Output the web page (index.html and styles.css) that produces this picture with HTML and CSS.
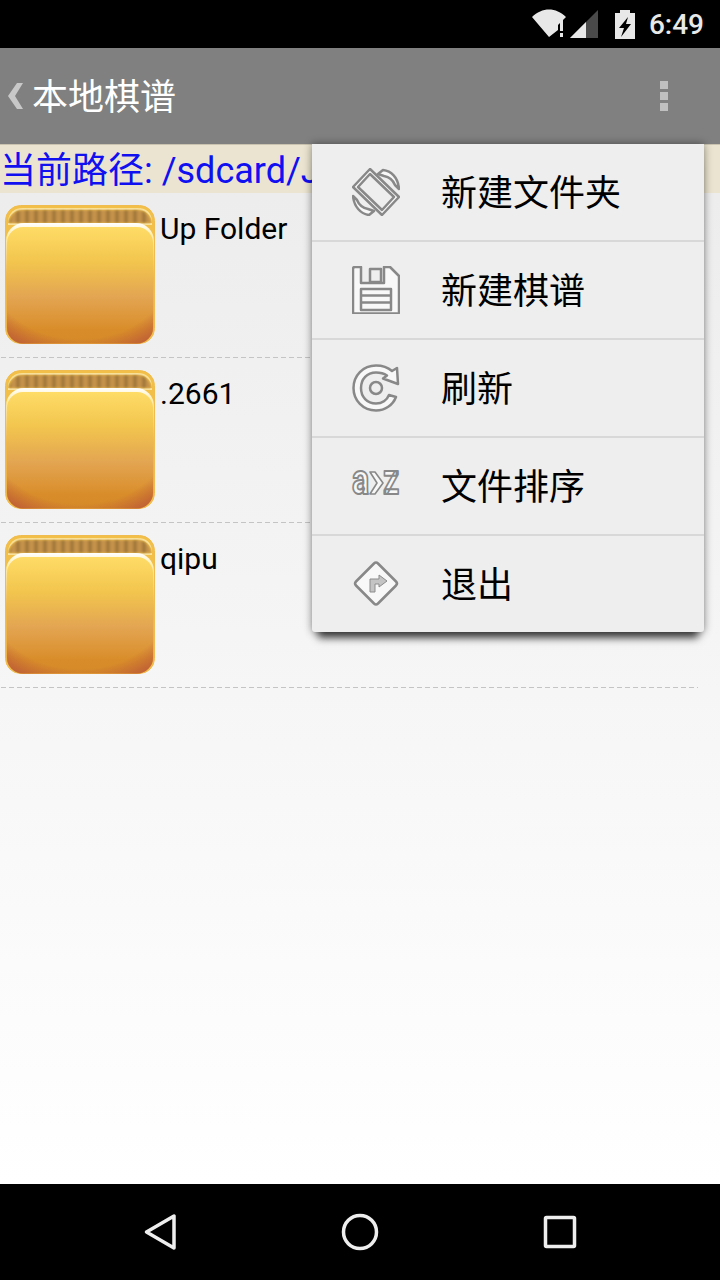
FILE: index.html
```html
<!DOCTYPE html>
<html lang="zh-CN">
<head>
    <meta charset="UTF-8">
    <meta name="viewport" content="width=device-width, initial-scale=1.0">
    <title>本地棋谱</title>
    <link rel="stylesheet" href="styles.css">
</head>
<body>

    <!-- shared folder picture -->
    <svg class="defs" width="0" height="0">
        <defs>
            <linearGradient id="folder-front" x1="0" y1="0" x2="0" y2="1">
                <stop offset="0" stop-color="#fedc66"/>
                <stop offset="0.3" stop-color="#f2c54e"/>
                <stop offset="0.6" stop-color="#e3a552"/>
                <stop offset="0.88" stop-color="#d98d2a"/>
                <stop offset="1" stop-color="#d58a28"/>
            </linearGradient>
            <radialGradient id="folder-corner" cx="0.5" cy="0.33" r="0.8">
                <stop offset="0.79" stop-color="#bf5f36" stop-opacity="0"/>
                <stop offset="1" stop-color="#bf5f36" stop-opacity="1"/>
            </radialGradient>
            <linearGradient id="folder-shine" x1="0" y1="0" x2="0" y2="1">
                <stop offset="0" stop-color="#ffffff"/>
                <stop offset="0.1" stop-color="#ffeeb0"/>
                <stop offset="0.45" stop-color="#f0b848"/>
                <stop offset="1" stop-color="#eeb048"/>
            </linearGradient>
            <pattern id="folder-stripe" width="9" height="14" patternUnits="userSpaceOnUse">
                <rect width="9" height="14" fill="#c49248"/>
                <rect x="2" width="4" height="14" fill="#a47a3c"/>
            </pattern>
            <filter id="soft" x="-5%" y="-20%" width="110%" height="140%">
                <feGaussianBlur stdDeviation="1.200"/>
            </filter>
            <symbol id="folder" viewBox="0 0 150 139">
                <rect x="0.5" y="0.5" width="149" height="138" rx="15" fill="#f2c048" stroke="#f0bc50"/>
                <path d="M3 16 C4 7 10 3 18 3 H132 C141 3 146 7 147 16 V20 H3 Z" fill="#ffe8a0"/>
                <path d="M3 18 C4 9 11 5 18 5 H132 C140 5 146 9 147 18 Z" fill="#f0c048"/>
                <path d="M4 18 C5 9 11 5 18 5 H132 C139 5 145 9 146 18 Z" fill="url(#folder-stripe)" filter="url(#soft)"/>
                <rect x="1" y="18" width="148" height="121" rx="18" fill="url(#folder-shine)"/>
                <rect x="2" y="22" width="146" height="116.500" rx="16" fill="url(#folder-front)"/>
                <rect x="2" y="22" width="146" height="116.500" rx="16" fill="url(#folder-corner)"/>
            </symbol>
        </defs>
    </svg>

    <div class="status-bar">
        <svg class="status-net" width="68" height="30" viewBox="0 0 68 30">
            <path d="M0 8 C10 -2 24 -2 34 8 L26 16 V21 L17 28 Z" fill="#e8e8e8"/>
            <rect x="28" y="11" width="3" height="11" fill="#e8e8e8"/>
            <rect x="28" y="24" width="3" height="4" fill="#e8e8e8"/>
            <path d="M38 29 L66 1 V29 Z" fill="#4a4a4a"/>
            <path d="M38 29 L54 13 V29 Z" fill="#e8e8e8"/>
        </svg>
        <svg class="status-battery" width="20" height="29" viewBox="0 0 20 29">
            <path d="M0 3 H5 V0 H15 V3 H20 V29 H0 Z" fill="#e8e8e8"/>
            <path d="M13 7 L4 18 H9 L6 27 L16 14 H11 Z" fill="#000"/>
        </svg>
        <span class="status-time">6:49</span>
    </div>

    <div class="action-bar">
        <svg class="back-icon" width="15" height="26" viewBox="0 0 15 26">
            <path d="M9 0 H15 L7 13 L15 26 H9 L0 13 Z" fill="#c8c8c8"/>
        </svg>
        <span class="action-title">本地棋谱</span>
        <div class="overflow-btn">
            <i></i><i></i><i></i>
        </div>
    </div>

    <div class="content">
        <div class="path-bar">当前路径: /sdcard/Jieqi</div>

        <div class="file-row">
            <svg class="folder-icon"><use href="#folder"/></svg>
            <span class="file-name">Up Folder</span>
        </div>
        <div class="file-row">
            <svg class="folder-icon"><use href="#folder"/></svg>
            <span class="file-name">.2661</span>
        </div>
        <div class="file-row">
            <svg class="folder-icon"><use href="#folder"/></svg>
            <span class="file-name">qipu</span>
        </div>

        <!-- Popup menu -->
        <div class="popup-menu">
            <div class="menu-item">
                <svg class="menu-icon" viewBox="0 0 48 48">
                    <g class="ic">
                        <path d="M18 1 L47 29 L30 47 L1 19 Z"/>
                        <path class="ic-inner" d="M18 6 L42 29 L30 42 L6 19 Z"/>
                        <path d="M26 6 L31 2 C39 3 46 9 47 21 L43 17 C41 12 37 9 32 8 Z"/>
                        <path d="M22 43 L17 47 C9 46 2 39 1 28 L5 32 C7 37 11 40 16 41 Z"/>
                    </g>
                </svg>
                <span>新建文件夹</span>
            </div>
            <div class="menu-item">
                <svg class="menu-icon" viewBox="0 0 48 48">
                    <g class="ic">
                        <path d="M3 1 H9 V17 H32 V1 H38 L47 10 V46 Q47 47.500 46 47.500 H2 Q1 47.500 1 46 V3 Q1 1 3 1 Z"/>
                        <rect x="18" y="3" width="11" height="13" class="ic-inner"/>
                        <rect x="9" y="23" width="30" height="21"/>
                        <path d="M9 29.500 H39 M9 36.500 H39" fill="none"/>
                    </g>
                </svg>
                <span>新建棋谱</span>
            </div>
            <div class="menu-item">
                <svg class="menu-icon" viewBox="0 0 48 48">
                    <g class="ic">
                        <path d="M24 1.500 C31 1.500 36 3.500 40 7 L45 4 L46 20 L31 14.500 L35 11.500 C32 9.500 28 8.500 24 8.500 C15 8.500 9 15 9 24 C9 33 15 39.500 24 39.500 C30 39.500 35 36 37 31 L44 33 C41 41 33 46.500 24 46.500 C11 46.500 1.500 36.500 1.500 24 C1.500 11.500 11 1.500 24 1.500 Z"/>
                        <circle cx="24" cy="24" r="6" class="ic-inner"/>
                    </g>
                </svg>
                <span>刷新</span>
            </div>
            <div class="menu-item">
                <svg class="menu-icon az-icon" viewBox="0 0 48 48">
                    <text class="az-text" font-size="32" transform="translate(0 32) scale(1 1.3)">a</text>
                    <path class="ic-path" d="M18 10 H23 L31 21 L23 32 H18 L25 21 Z"/>
                    <text class="az-text" font-size="32" transform="translate(31 32) scale(1 1.3)">z</text>
                </svg>
                <span>文件排序</span>
            </div>
            <div class="menu-item">
                <svg class="menu-icon" viewBox="0 0 48 48">
                    <g class="ic">
                        <path d="M22 3.500 Q24 1.500 26 3.500 L44 21.500 Q46 23.500 44 25.500 L26 43.500 Q24 45.500 22 43.500 L4 25.500 Q2 23.500 4 21.500 Z"/>
                    </g>
                    <path class="turn" d="M18 32 V19 H27 V15 L35 21 L27 27 V24 H23 V32 Z"/>
                </svg>
                <span>退出</span>
            </div>
        </div>
    </div>

    <div class="nav-bar">
        <svg width="480" height="48" viewBox="0 0 480 48">
            <g class="nav-icons">
                <path d="M26.500 24 L54 8 V40 Z"/>
                <circle cx="240" cy="24" r="16.500"/>
                <rect x="425.500" y="9.500" width="29" height="29" rx="1"/>
            </g>
        </svg>
    </div>

</body>
</html>
```

FILE: styles.css
```css
html, body {
    margin: 0;
    padding: 0;
}

body {
    width: 720px;
    height: 1280px;
    display: flex;
    flex-direction: column;
    overflow: hidden;
    font-family: "Roboto", "Noto Sans CJK SC", sans-serif;
    background-color: #000;
}

.defs {
    position: absolute;
}

.status-bar {
    height: 48px;
    flex: none;
    display: flex;
    align-items: center;
    justify-content: flex-end;
    padding-right: 16px;
    background-color: #000;
}

.status-net {
    margin-right: 15px;
}

.status-battery {
    margin-right: 14px;
}

.status-time {
    color: #e8e8e8;
    font-size: 28px;
    font-weight: 500;
}

.action-bar {
    height: 96px;
    flex: none;
    display: flex;
    align-items: center;
    padding-left: 8px;
    background-color: #808080;
}

.action-title {
    margin-left: 9px;
    margin-top: -4px;
    color: #fff;
    font-size: 36px;
    font-family: "Noto Sans CJK SC", sans-serif;
}

.overflow-btn {
    margin-left: auto;
    margin-right: 52px;
    display: flex;
    flex-direction: column;
    gap: 3px;
}

.overflow-btn i {
    display: block;
    width: 8px;
    height: 8px;
    background-color: #c0c0c0;
}

.content {
    position: relative;
    flex: 1;
    background: linear-gradient(#ececec, #ffffff);
}

.path-bar {
    height: 49px;
    box-sizing: border-box;
    line-height: 53px;
    overflow: hidden;
    white-space: nowrap;
    color: #1010f0;
    font-size: 36px;
    background-color: #ebe4d0;
    border-top: 1px solid #c9c3b0;
    font-family: "Roboto", "Noto Sans CJK SC", sans-serif;
}

.file-row {
    width: 698px;
    height: 165px;
    box-sizing: border-box;
    padding: 12px 0 0 5px;
    display: flex;
    background: linear-gradient(to right, #c4c4c4 5px, transparent 5px) 1px 100% / 8px 1px repeat-x;
}

.folder-icon {
    width: 150px;
    height: 139px;
    flex: none;
}

.file-name {
    margin-left: 5px;
    color: #000;
    font-size: 30px;
    line-height: 48px;
}

.popup-menu {
    position: absolute;
    top: 0;
    left: 312px;
    width: 392px;
    background-color: #eeeeee;
    border-radius: 0 0 3px 3px;
    box-shadow: 0 12px 8px -6px rgba(0, 0, 0, 0.7), 0 0 8px rgba(0, 0, 0, 0.45);
}

.menu-item {
    height: 96px;
    display: flex;
    align-items: center;
    padding-left: 40px;
    border-bottom: 2px solid #d8d8d8;
    color: #000;
    font-size: 36px;
    font-family: "Noto Sans CJK SC", sans-serif;
}

.menu-item span {
    margin-left: -1px;
    margin-top: -4px;
}

.menu-item:last-child {
    border-bottom: none;
}

.menu-icon {
    width: 48px;
    height: 48px;
    margin-right: 42px;
    flex: none;
}

.az-icon {
    overflow: visible;
}

.ic rect, .ic path, .ic circle {
    fill: #f8f8f8;
    stroke: #888888;
    stroke-width: 2.5;
    stroke-linejoin: round;
}

.ic .ic-inner {
    fill: #eeeeee;
}

.ic-path, .az-text {
    fill: #f8f8f8;
    stroke: #888888;
    stroke-width: 1.600;
    stroke-linejoin: round;
}

.az-text {
    font-family: "Roboto", sans-serif;
    font-weight: 700;
}

.turn {
    fill: #c4c4c4;
    stroke: #8c8c8c;
    stroke-width: 1;
}

.nav-bar {
    height: 96px;
    flex: none;
    display: flex;
    align-items: center;
    justify-content: center;
    background-color: #000;
}

.nav-icons path, .nav-icons circle, .nav-icons rect {
    fill: none;
    stroke: #eeeeee;
    stroke-width: 3.5;
    stroke-linejoin: round;
}
```
